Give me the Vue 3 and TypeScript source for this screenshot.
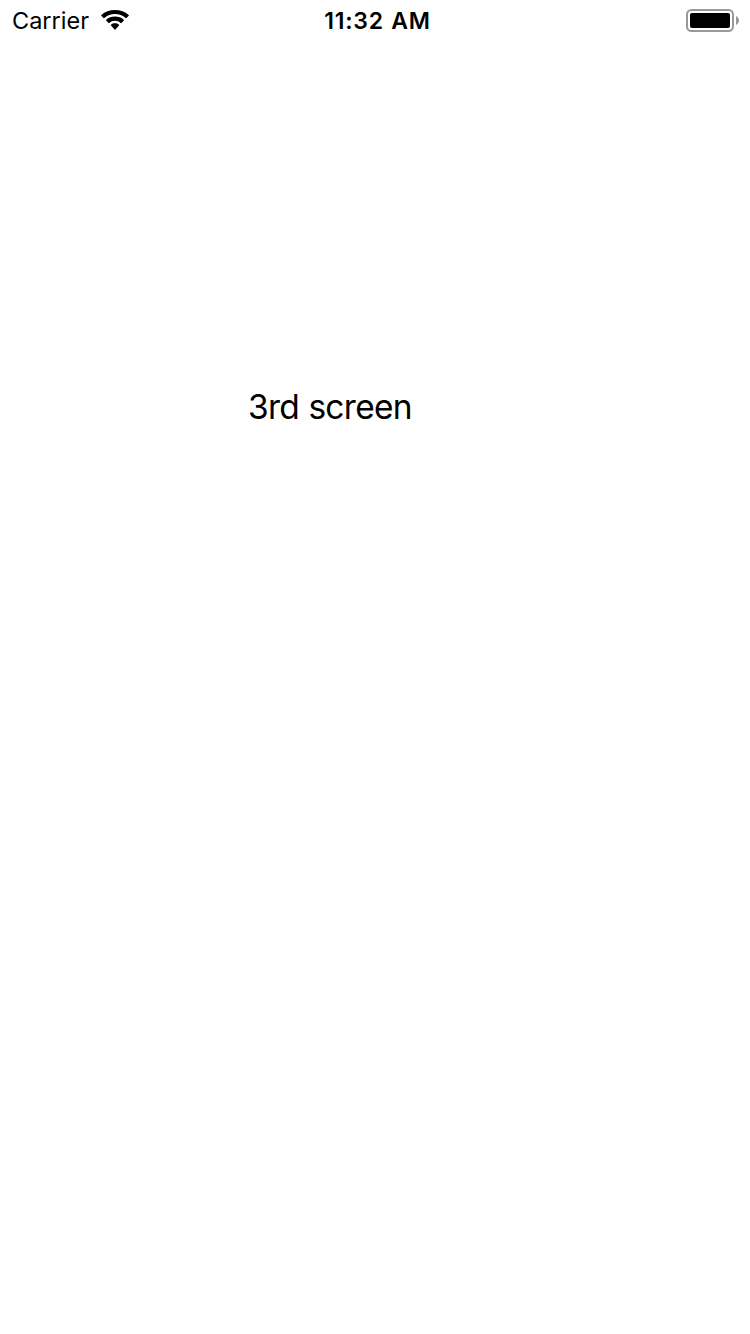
<script setup lang="ts">
const carrier: string = 'Carrier'
const time: string = '11:32 AM'
const title: string = '3rd screen'
</script>

<template>
  <main class="screen">
    <header class="status">
      <div class="left">
        <span class="carrier">{{ carrier }}</span>
        <svg class="wifi" width="28" height="21" viewBox="0 0 28 21" aria-hidden="true">
          <path d="M14 0C8.7 0 3.9 1.8 .3 5Q-.1 5.4 .3 5.8L2.5 8Q2.9 8.4 3.3 8C6.2 5.5 9.9 4.1 14 4.1S21.8 5.5 24.7 8Q25.1 8.4 25.5 8L27.7 5.8Q28.1 5.4 27.7 5C24.1 1.8 19.3 0 14 0Z" />
          <path d="M14 6.6C10.6 6.6 7.5 7.8 5.2 9.8Q4.8 10.2 5.2 10.6L7.5 12.9Q7.9 13.3 8.3 12.9C9.9 11.6 11.8 10.8 14 10.8S18.1 11.6 19.7 12.9Q20.1 13.3 20.5 12.9L22.8 10.6Q23.2 10.2 22.8 9.8C20.5 7.8 17.4 6.6 14 6.6Z" />
          <path d="M14 13.3C12.5 13.3 11.1 13.8 10 14.7Q9.6 15.1 10 15.5L13.6 19.6Q14 20 14.4 19.6L18 15.5Q18.4 15.1 18 14.7C16.9 13.8 15.5 13.3 14 13.3Z" />
        </svg>
      </div>
      <span class="time">{{ time }}</span>
      <svg class="battery" width="53" height="23" viewBox="0 0 53 23" aria-hidden="true">
        <rect x="1" y="1" width="46" height="21" rx="4.5" fill="none" stroke="#999" stroke-width="2" />
        <rect x="4" y="4" width="40" height="15" rx="2" />
        <path d="M50 7C51.6 7.8 53 9.5 53 11.5S51.6 15.2 50 16Z" fill="#999" />
      </svg>
    </header>
    <h1 class="title">{{ title }}</h1>
  </main>
</template>

<style>
body {
  margin: 0;
  background: #fff;
}
</style>

<style scoped>
.screen {
  width: 750px;
  height: 1334px;
  overflow: hidden;
  background: #fff;
  color: #000;
  font-family: Inter, "Liberation Sans", sans-serif;
}
.status {
  display: grid;
  grid-template-columns: 1fr auto 1fr;
  height: 40px;
  align-items: center;
  padding: 0 11px 0 12px;
}
.left {
  display: flex;
  align-items: center;
}
.carrier {
  width: 89px;
  font-size: 23.5px;
  line-height: 38px;
  padding-top: 2px;
}
.time {
  padding: 2px 0 0 4px;
  font-size: 23px;
  font-weight: 600;
  line-height: 38px;
  letter-spacing: 0.75px;
  word-spacing: 1px;
}
.battery {
  justify-self: end;
}
.title {
  margin: 347px 0 0 248px;
  font-size: 33.5px;
  font-weight: 400;
  line-height: 40px;
  letter-spacing: -0.7px;
  word-spacing: 0.5px;
}
</style>
